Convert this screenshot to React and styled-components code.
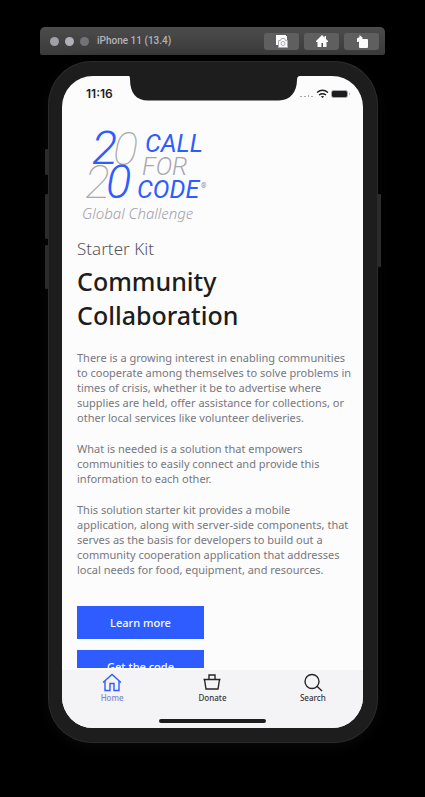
import React from 'react';
import styled, { createGlobalStyle } from 'styled-components';

const Global = createGlobalStyle`
  *, *::before, *::after { box-sizing: border-box; }
  body { margin: 0; background: #000; font-family: "Noto Sans", "Open Sans", sans-serif; }
  button { border: 0; padding: 0; margin: 0; background: none; font: inherit; color: inherit; cursor: pointer; }
  h1, h2, p { margin: 0; }
`;

const Page = styled.div`
  display: flex;
  flex-direction: column;
  height: 100vh;
  padding: 27px 40px 54px;
`;

const WindowBar = styled.header`
  display: flex;
  align-items: center;
  flex: none;
  height: 28px;
  padding: 0 6px 0 10px;
  border-radius: 5px 5px 2px 2px;
  background: linear-gradient(#4c4c4c, #3a3a3a);
`;

const Lights = styled.div`
  display: flex;
  gap: 6px;
`;

const Light = styled.span`
  width: 9px;
  height: 9px;
  border-radius: 50%;
  background: ${(p) => p.$tone};
`;

const WindowTitle = styled.span`
  flex: 1;
  padding-left: 8px;
  color: #b4b4ba;
  font: 500 10px/14px Roboto, sans-serif;
`;

const ToolButtons = styled.div`
  display: flex;
  gap: 5px;
`;

const ToolButton = styled.button`
  display: grid;
  place-items: center;
  width: 35px;
  height: 17px;
  border-radius: 3px;
  background: #5f5f60;
`;

const Phone = styled.main`
  position: relative;
  display: flex;
  flex: 1;
  min-height: 0;
  margin: 6px 7px 0 8px;
  padding: 15px 15px 15px 14px;
  border-radius: 44px;
  background: #1d1d1d;
  box-shadow: inset 0 0 0 1px #2a2a2a, 0 4px 14px #090909;
`;

const SideKey = styled.span`
  position: absolute;
  ${(p) => p.$side}: -3px;
  top: ${(p) => p.$top}px;
  width: 3px;
  height: ${(p) => p.$length}px;
  border-radius: 1px;
  background: #2b2b2b;
`;

const Screen = styled.div`
  display: flex;
  flex: 1;
  flex-direction: column;
  min-width: 0;
  overflow: hidden;
  border-radius: 31px;
  background: #fcfcfc;
`;

const StatusBar = styled.div`
  display: flex;
  flex: none;
  justify-content: space-between;
  height: 36px;
  padding: 0 12px 0 24px;
`;

const Clock = styled.time`
  width: 42px;
  padding-top: 10px;
  color: #1d1d1f;
  font: 600 12px/16px Inter, sans-serif;
`;

const Notch = styled.svg`
  display: block;
  width: 171px;
  height: 25px;
`;

const StatusIcons = styled.svg`
  width: 51px;
  height: 10px;
  margin-top: 13px;
`;

const Content = styled.section`
  flex: 1;
  min-height: 0;
  overflow: hidden;
  padding: 16px 0 0 15px;
`;

const Logo = styled.svg`
  display: block;
  width: 132px;
  height: 100px;
`;

const Kicker = styled.h2`
  padding-top: 8px;
  color: #55555f;
  font: 300 17px/26px "Noto Sans", sans-serif;
`;

const Title = styled.h1`
  padding-top: 2px;
  color: #1d1d1d;
  font: 500 25px/34px "Noto Sans", sans-serif;
`;

const Copy = styled.div`
  display: flex;
  flex-direction: column;
  gap: 16px;
  padding-top: 18px;
  color: #77777f;
  font-size: 11px;
  line-height: 15px;
  white-space: nowrap;
`;

const Actions = styled.div`
  display: flex;
  flex-direction: column;
  gap: 11px;
  padding-top: 29px;
`;

const Action = styled.button`
  flex: none;
  width: 127px;
  height: 33px;
  background: #2e5cff;
  color: #fcfcfc;
  font: 500 11px/16px "Noto Sans", sans-serif;
`;

const TabBar = styled.nav`
  display: grid;
  flex: none;
  grid-template-columns: repeat(3, 1fr);
  border-top: 2px solid #fcfcfc;
  background: #f4f4f6;
`;

const Tab = styled.button`
  display: flex;
  flex-direction: column;
  align-items: center;
  padding-top: 3px;
  color: ${(p) => (p.$active ? '#2e5cff' : '#26262a')};
  font: 500 8px/12px "Noto Sans", sans-serif;
`;

const TabIcon = styled.svg`
  width: 20px;
  height: 19px;
  fill: none;
  stroke: currentColor;
  stroke-width: 1.4;
`;

const TabLabel = styled.span`
  color: ${(p) => (p.$active ? '#8089c8' : '#33333a')};
`;

const HomeIndicator = styled.span`
  grid-column: 1 / -1;
  justify-self: center;
  width: 107px;
  height: 4px;
  margin: 15px 0 5px;
  border-radius: 2px;
  background: #1d1d1d;
`;

const paragraphs = [
  [
    'There is a growing interest in enabling communities',
    'to cooperate among themselves to solve problems in',
    'times of crisis, whether it be to advertise where',
    'supplies are held, offer assistance for collections, or',
    'other local services like volunteer deliveries.',
  ],
  [
    'What is needed is a solution that empowers',
    'communities to easily connect and provide this',
    'information to each other.',
  ],
  [
    'This solution starter kit provides a mobile',
    'application, along with server-side components, that',
    'serves as the basis for developers to build out a',
    'community cooperation application that addresses',
    'local needs for food, equipment, and resources.',
  ],
];

const tabs = [
  {
    label: 'Home',
    active: true,
    icon: <path d="M1 9.500 10 1.500l9 8M3 8v9.500h5v-7h4v7h5V8" />,
  },
  {
    label: 'Donate',
    icon: <path d="M1.500 6.500h17M2.500 6.500l1.500 9.500h12l1.500-9.500M7 6.500V2h6v4.500" />,
  },
  {
    label: 'Search',
    icon: (
      <>
        <circle cx="9" cy="8.500" r="7" />
        <path d="m14 13.300 5 4.700" />
      </>
    ),
  },
];

function CallForCodeLogo() {
  return (
    <Logo viewBox="0 0 132 100" role="img" aria-label="2020 Call for Code Global Challenge" fontFamily="Roboto, sans-serif" fontStyle="italic">
      <g fontSize="47" fontWeight="300">
        <text x="36" y="37" fill="#a8a8b0" fontWeight="100">0</text>
        <text x="8" y="70" fill="#a8a8b0" fontWeight="100">2</text>
        <text x="15" y="36" fill="#2e5cff">2</text>
        <text x="29" y="70" fill="#2e5cff">0</text>
      </g>
      <g fontSize="25">
        <text x="68" y="24" fill="#2e5cff">CALL</text>
        <text x="65" y="47" fill="#a8a8b0" fontWeight="300">FOR</text>
        <text x="60" y="70" fill="#2e5cff">CODE</text>
      </g>
      <text x="124" y="60" fontSize="7" fill="#8088b0">®</text>
      <text x="5" y="91" fontSize="15" fontWeight="300" fontFamily="Noto Sans, sans-serif" fill="#a0a0a8">Global Challenge</text>
    </Logo>
  );
}

export default function App() {
  return (
    <>
      <Global />
      <Page>
        <WindowBar>
          <Lights>
            <Light $tone="#a0a0a6" />
            <Light $tone="#b0b0b6" />
            <Light $tone="#737377" />
          </Lights>
          <WindowTitle>iPhone 11 (13.4)</WindowTitle>
          <ToolButtons>
            <ToolButton aria-label="Screenshot">
              <svg width="16" height="15" viewBox="0 0 16 15">
                <path d="M2 1h10v1h1v11H4v-2H2z" fill="#fcfcfc" />
                <path d="M4.500 6.500h2l1-2h3l1 2h2v7h-9z" fill="#fcfcfc" stroke="#a8a8b0" />
                <circle cx="9" cy="9.500" r="2" fill="none" stroke="#a8a8b0" />
              </svg>
            </ToolButton>
            <ToolButton aria-label="Home">
              <svg width="14" height="14" viewBox="0 0 14 14">
                <path d="M7 1 1 7v1h1.500v5h9V8H13V7l-2-2V2H9.500v1.500z" fill="#fcfcfc" />
                <path d="M6.500 9h1.500v4H6.500z" fill="#4c4c4c" />
              </svg>
            </ToolButton>
            <ToolButton aria-label="Rotate">
              <svg width="14" height="15" viewBox="0 0 14 15" fill="#fcfcfc">
                <rect x="4" y="5" width="9" height="9" rx="1" />
                <path d="M2 8V4.500L4.500 3V1L8 4 4.500 7V5L3.500 8z" />
              </svg>
            </ToolButton>
          </ToolButtons>
        </WindowBar>
        <Phone>
          <SideKey $side="left" $top={88} $length={26} />
          <SideKey $side="left" $top={133} $length={45} />
          <SideKey $side="left" $top={184} $length={44} />
          <SideKey $side="right" $top={133} $length={73} />
          <Screen>
            <StatusBar>
              <Clock>11:16</Clock>
              <Notch viewBox="0 0 171 25" aria-hidden="true">
                <path d="M0 0q1 0 1 3c0 14 6 21.500 18 21.500h131c11 0 18-8.500 18-20.500q0-4 3-4z" fill="#1d1d1d" />
              </Notch>
              <StatusIcons viewBox="0 0 51 10" aria-hidden="true">
                <g fill="#a8a8b0">
                  <rect x="0" y="7" width="2" height="1" />
                  <rect x="4" y="7" width="2" height="1" />
                  <rect x="8" y="6" width="1" height="2" />
                  <rect x="11" y="7" width="2" height="1" />
                </g>
                <g fill="none" stroke="#1d1d1d" strokeWidth="1.500">
                  <path d="M17 3.500q5.500-4.500 11 0M19 6q3.500-2.500 7 0" />
                </g>
                <path d="m20.800 7.500 1.700 1.500 1.700-1.500q-1.700-1-3.400 0z" fill="#1d1d1d" />
                <rect x="31.500" y="1.500" width="16" height="7" rx="2" fill="#1d1d1d" stroke="#a8a8b0" />
                <path d="M49 3.500v3q2-1.500 0-3" fill="#a8a8b0" />
              </StatusIcons>
            </StatusBar>
            <Content>
              <CallForCodeLogo />
              <Kicker>Starter Kit</Kicker>
              <Title>
                Community
                <br />
                Collaboration
              </Title>
              <Copy>
                {paragraphs.map((lines) => (
                  <p key={lines[0]}>
                    {lines.map((line, i) => (
                      <React.Fragment key={line}>
                        {i > 0 && <br />}
                        {line}
                      </React.Fragment>
                    ))}
                  </p>
                ))}
              </Copy>
              <Actions>
                <Action>Learn more</Action>
                <Action>Get the code</Action>
              </Actions>
            </Content>
            <TabBar>
              {tabs.map(({ label, active, icon }) => (
                <Tab key={label} $active={active} aria-current={active ? 'page' : undefined}>
                  <TabIcon viewBox="0 0 20 19" aria-hidden="true">{icon}</TabIcon>
                  <TabLabel $active={active}>{label}</TabLabel>
                </Tab>
              ))}
              <HomeIndicator />
            </TabBar>
          </Screen>
        </Phone>
      </Page>
    </>
  );
}
